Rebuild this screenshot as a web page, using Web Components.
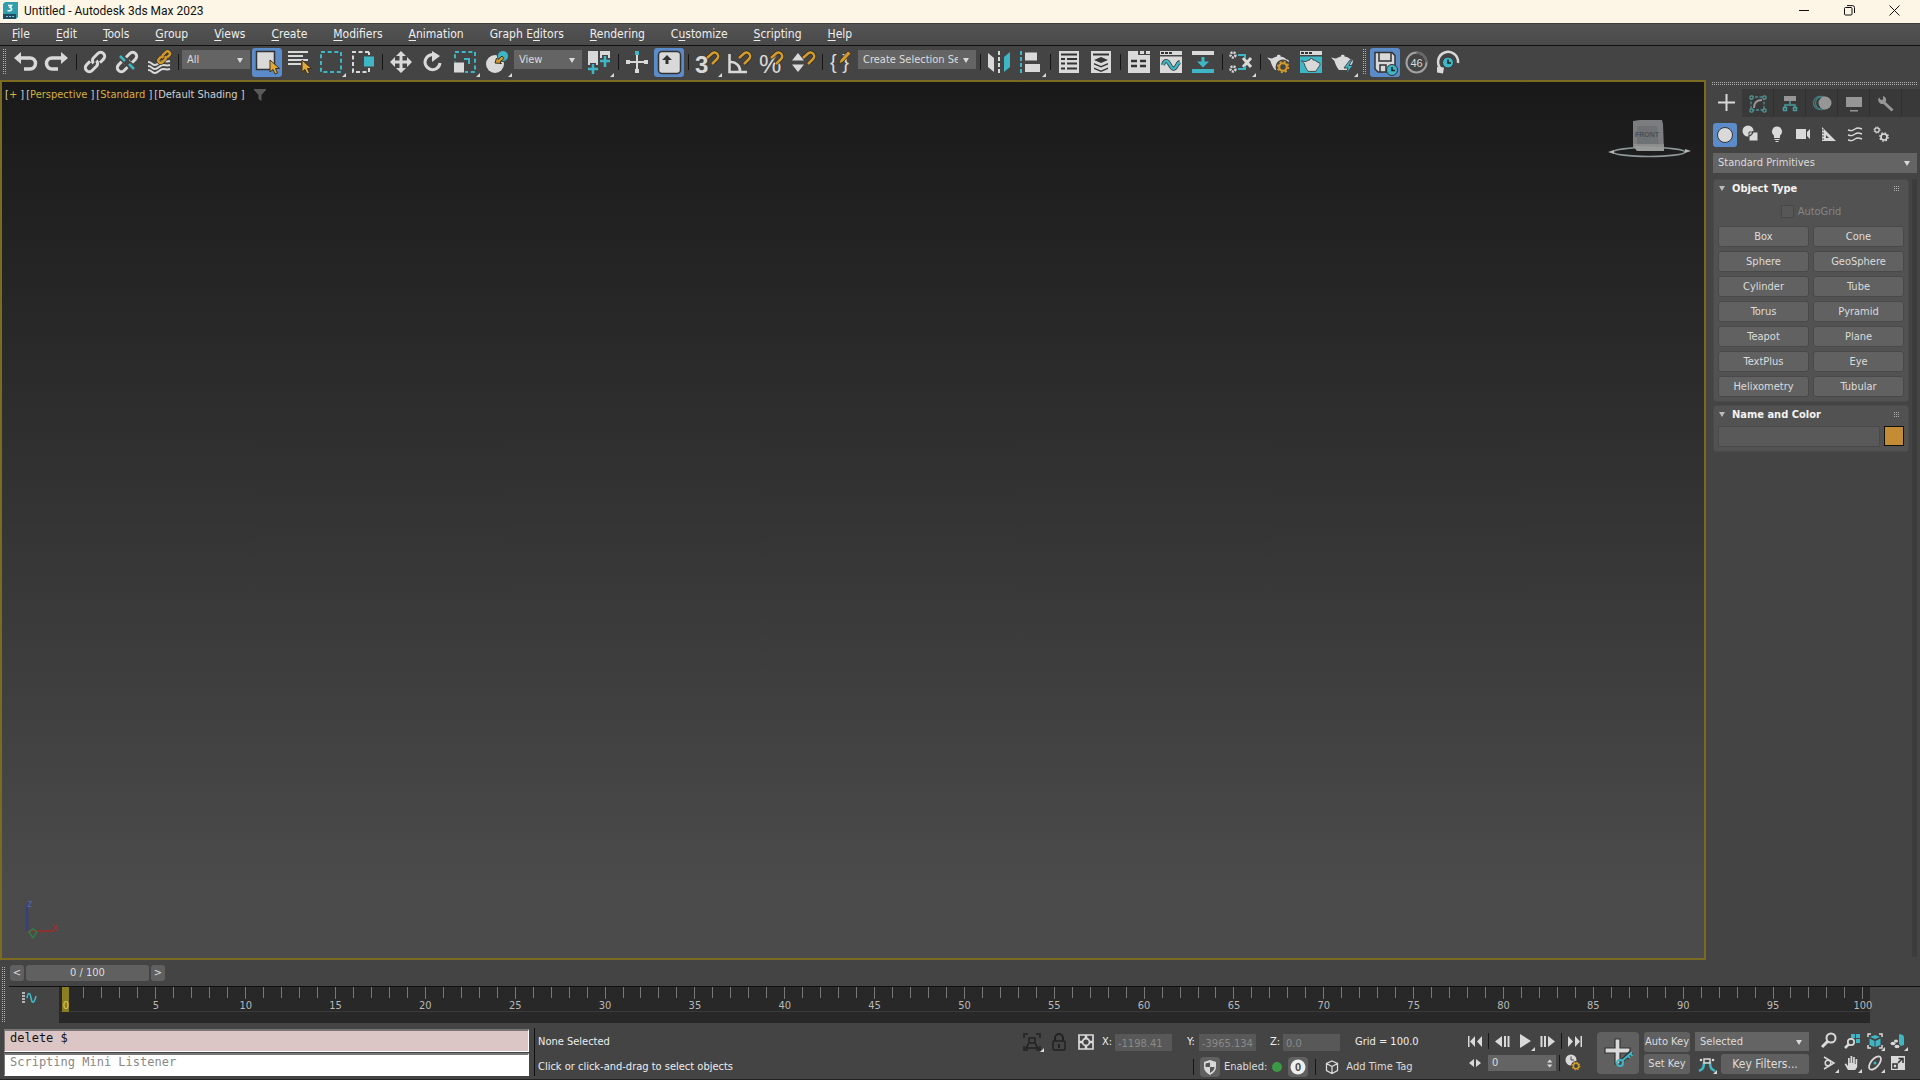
<!DOCTYPE html>
<html lang="en">
<head>
<meta charset="utf-8">
<title>Untitled - Autodesk 3ds Max 2023</title>
<style>
  html, body { margin: 0; height: 100%; }
  body {
    --ui: "DejaVu Sans Condensed", "DejaVu Sans", "Noto Sans", sans-serif;
    --bg: #444444; --field: #646464; --text: #dcdcdc; --light: #d9d9d9;
    --teal: #3fb6c6; --gold: #d39a2c; --blue: #5b8bc9; --accent: #7b6a22;
    --dots: conic-gradient(from 270deg, #b0b0b0 25%, transparent 0) 0 0 / 2px 2px;
    background: var(--bg); color: var(--text);
    font: 11px/14px var(--ui); overflow: hidden;
  }
</style>
</head>
<body>
<max-app></max-app>
<script>
const magnet = '<path d="M16 12l5-4.500a3.600 3.600 0 0 1 5 5.500l-5 5" fill="none" stroke="#2f2a20" stroke-width="4"/><path d="M16 12l5-4.500a3.600 3.600 0 0 1 5 5.500l-5 5" fill="none" stroke="var(--gold)" stroke-width="2.500"/>';
const cursor = '<path d="M19 14v12l3-2.500 2 4.500 2.500-1-2-4.500h4z" fill="#e0a93a" stroke="#3a3020" stroke-width="1"/>';
const chain = (c, w) => `<g transform="rotate(-45 16 16)" fill="none" stroke="${c}" stroke-width="${w}"><path d="M13 12H8a4 4 0 0 0 0 8h6a4 4 0 0 0 4-4M19 20h5a4 4 0 0 0 0-8h-6a4 4 0 0 0-4 4"/></g>`;
const pot = '<path d="M4 11.500l4.500 1c1.500 0 2.500-1.500 5.500-2V9.500c0-1 3.500-1 3.500 0v1c3 .3 4.500 1.500 6 3 2-.5 3 1.500 2 3.500S22.500 21 21 24h-9C9.500 21 8 17.500 7.500 15z"/>';
const gear = (x, y, r, c) => `<circle cx="${x}" cy="${y}" r="${r}" fill="none" stroke="${c}" stroke-width="${r * .55}"/><circle cx="${x}" cy="${y}" r="${r * 1.4}" fill="none" stroke="${c}" stroke-width="${r * .45}" stroke-dasharray="${r * .55} ${r * .55}"/>`;
const clock = (x, y, r) => `<circle cx="${x}" cy="${y}" r="${r}" fill="var(--teal)" stroke="#333"/><path d="M${x} ${y - 3}v3.500h3" fill="none" stroke="#222" stroke-width="1.500"/>`;

/* Toolbar artwork: 32 x 32 grid, drawn in the light tone unless a shape says otherwise */
const ICONS = {
  undo: '<path d="M5 12l7-6v12z"/><path d="M11 12h10a5.500 5.500 0 0 1 0 11h-6" fill="none" stroke="var(--light)" stroke-width="3.500"/>',
  redo: '<path d="M27 12l-7-6v12z"/><path d="M21 12H11a5.500 5.500 0 0 0 0 11h6" fill="none" stroke="var(--light)" stroke-width="3.500"/>',
  link: chain('var(--light)', 3),
  unlink: chain('var(--light)', 3) + '<path d="M7 8l18 17" stroke="#444" stroke-width="6"/><path d="M9 10l5 5M18 18l5 5" stroke="var(--teal)" stroke-width="2.500"/>',
  bind: '<g fill="none" stroke="var(--light)" stroke-width="2"><path d="M5 16c4 0 4 3 7 3s5-4 8-4 4 1 7 0M5 20c4 0 4 3 7 3s5-4 8-4 4 1 7 0M5 24c4 0 4 3 7 3s5-4 8-4 4 1 7 0"/></g><g transform="translate(11.500 1.500) scale(.6)">' + chain('#3a3020', 6) + chain('var(--gold)', 4) + '</g>',
  select: '<path d="M5.500 5.500h18v18h-18z" stroke="#333" stroke-width="1.500"/>' + cursor,
  byname: '<path d="M5 5h20v2H5zM5 9h15v2H5zM5 13h20v2H5zM5 17h13v2H5z"/>' + cursor,
  region: '<path d="M6 6h20v20H6z" fill="none" stroke="var(--teal)" stroke-width="2" stroke-dasharray="4 2.700"/>',
  crossing: '<path d="M22 6H6v20h16M22 6v3M22 22v4" fill="none" stroke="var(--light)" stroke-width="2" stroke-dasharray="4 2.500"/><path d="M17 10.500h10v10H17z" fill="var(--teal)"/>',
  move: '<path d="M16 5l5 5h-3.500v4.500H22V11l5 5-5 5v-3.500h-4.500V22H21l-5 5-5-5h3.500v-4.500H10V21l-5-5 5-5v3.500h4.500V10H11z"/>',
  rotate: '<path d="M20.500 10.500A7.500 7.500 0 1 0 23 17" fill="none" stroke="var(--light)" stroke-width="3"/><path d="M15 5l8 5-8 6z"/>',
  scale: '<path d="M6 6h20v20H6z" fill="none" stroke="var(--teal)" stroke-width="2" stroke-dasharray="4 2.700"/><path d="M4.500 16h11v11h-11z" stroke="#444"/><path d="M15 13h5v5" fill="none" stroke="var(--teal)" stroke-width="2"/>',
  place: '<circle cx="14" cy="18" r="9"/><circle cx="22" cy="10" r="5.500" fill="var(--teal)" stroke="#444"/><path d="M14 17l1.500-5 1.500 1.500 4-3.500 2 2.500-4 3.500 1.500 1.500z" fill="var(--gold)" stroke="#3a3020"/>',
  pivot: '<path d="M5 5h10v14H5zM17 5h10v9H17z"/><path d="M10 17v11M5 22h10M22 9v12M17 15h10" stroke="#444" stroke-width="6"/><path d="M10 18v10M5 23h10M22 10v11M17 15h10" stroke="var(--teal)" stroke-width="2.500"/>',
  manip: '<path d="M15 9h2v6h7v2h-7v7h-2v-7H8v-2h7zM5 14h4v4H5zM23 14h4v4h-4zM14 23h4v4h-4z"/><path d="M14 5h4v4h-4z" fill="var(--teal)"/>',
  keyboard: '<rect x="5.500" y="5.500" width="22" height="22" rx="3.500" stroke="#333" stroke-width="1.500"/><path d="M14 9l5 5h-3.500v4h-3v-4H9z" fill="#333"/>',
  snap3: '<text x="4" y="26.500" font-family="Liberation Sans" font-weight="700" font-size="24">3</text>' + magnet,
  anglesnap: '<path d="M6.500 8v18H24M7 16a9 9 0 0 1 10 10" fill="none" stroke="var(--light)" stroke-width="2.500"/>' + magnet,
  percentsnap: '<text x="4" y="27" font-family="Liberation Sans" font-size="25">%</text>' + magnet,
  spinsnap: '<path d="M11 7l6 7.500H5zM11 26l6-7.500H5z"/>' + magnet,
  namedsets: '<text x="5" y="23" font-family="Liberation Sans" font-size="20">{ }</text><path d="M14 18l1-4L23 5l3 2.500-8 8.500z" fill="var(--gold)" stroke="#3a3020" stroke-width=".8"/>',
  mirror: '<path d="M5 7l6 5v14l-6-5z"/><path d="M21 11l6-5v15l-6 5z" fill="var(--teal)"/><path d="M16 5v23" stroke="var(--light)" stroke-width="2" stroke-dasharray="4 2"/>',
  align: '<path d="M10 6.500h12v8H10zM10 18h15v8H10z"/><path d="M6 5v23" stroke="var(--teal)" stroke-width="2" stroke-dasharray="4 2"/>',
  scene: '<path d="M6 5h20v22H6z"/><path d="M8 8.500h16M8 13h4M14 13h10M8 17.500h4M14 17.500h10M8 22.500h4M14 22.500h10" stroke="#333" stroke-width="2"/>',
  layers: '<path d="M6 5h20v22H6z"/><path d="M8 8.500h16" stroke="#333" stroke-width="2"/><path d="M16 11l7 3-7 3-7-3zM9 17l7 3 7-3v1.500l-7 3-7-3zM9 21.500l7 3 7-3V23l-7 3-7-3z" fill="#333"/>',
  ribbon: '<path d="M5 5h10v4h12v18H5zM17 5h4v3h-4zM23 5h4v3h-4z"/><path d="M8 15h6M17 15h6M8 20h6M17 20h6" stroke="#333" stroke-width="2.500"/>',
  curve: '<path d="M5 5h22v4H5zM5 10.500h22V27H5z"/><path d="M6 7h3M10 7h3M14 7h3" stroke="#333" stroke-width="2"/><path d="M8 19c1-4 3-5 5-3s4 9 7 6 2-5 5-6" fill="none" stroke="#333" stroke-width="4"/><path d="M8 19c1-4 3-5 5-3s4 9 7 6 2-5 5-6" fill="none" stroke="var(--teal)" stroke-width="2.500"/>',
  dope: '<path d="M5 5h22v4H5z"/><path d="M5 23h22v4H5zM14.500 11h3v4.500H22L16 21.500l-6-6h4.500z" fill="var(--teal)"/>',
  material: '<g fill="none" stroke="var(--light)" stroke-width="2.500" stroke-dasharray="2 1"><circle cx="8" cy="9" r="2.500"/><circle cx="8" cy="23" r="2.500"/></g><path d="M18 12l8 9M26 12l-8 9" stroke="var(--light)" stroke-width="3"/><path d="M13 9h7v3M13 23h7v-3" fill="none" stroke="var(--teal)" stroke-width="2"/>',
  rendersetup: pot + '<circle cx="20" cy="21" r="7.500" fill="#444"/>' + gear(20, 21, 3.800, 'var(--gold)'),
  frame: '<path d="M5 5h22v4H5z"/><path d="M6 7h3M10 7h3M14 7h3" stroke="#333" stroke-width="2"/><path d="M5 10.500h22V27H5z" fill="var(--teal)"/><g transform="translate(3 5) scale(.85)" stroke="#333">' + pot + '</g>',
  render: pot + '<path d="M23 14l-6 8h4l-2 6 7-8.500h-4l3-5.500z" fill="var(--teal)" stroke="#444"/>',
  autosave: '<path d="M6 6.500h17l3 3V26H9l-3-3z" fill="#d9d9d9" stroke="#333" stroke-width="1.500"/><path d="M10 7v8h12V7M11 26v-7h6v7" fill="none" stroke="#333" stroke-width="1.500"/>' + clock(23, 24, 5.500),
  count: '<circle cx="15.500" cy="16.500" r="10" fill="none" stroke="#a2a2a2" stroke-width="2"/><path d="M15.500 6.500a10 10 0 0 1 10 10" fill="none" stroke="#666" stroke-width="2"/><text x="15.500" y="21" text-anchor="middle" font-size="11" font-family="Liberation Sans">46</text>',
  history: '<path d="M25 17a10 10 0 1 0-17 6" fill="none" stroke="var(--light)" stroke-width="2.500"/><path d="M4 21l7 .5-1 6-6-1z"/>' + clock(15, 16.500, 5.500),

  /* command panel */
  plus: '<path d="M14.500 7h2v7.500H24v2h-7.500V24h-2v-7.500H7v-2h7.500z"/>',
  modify: '<path d="M9 10v13h13V10z" fill="none" stroke="#4a8f8e" stroke-width="1.300" stroke-dasharray="3 1.500"/><path d="M12 21c0-6 3-8 8-8" fill="none" stroke="#969696" stroke-width="2"/><path d="M8 9h3v3H8zM21 9h3v3h-3zM8 22h3v3H8zM21 22h3v3h-3z" fill="#393939" stroke="#58a8a4"/>',
  hierarchy: '<path d="M10 9h12v5H10z" fill="#969696"/><path d="M16 14v3M11 22v-4h10v4" fill="none" stroke="#4a9d9a" stroke-width="1.500"/><path d="M9.500 20.500h3v3h-3zM19.500 20.500h3v3h-3z" fill="#393939" stroke="#4a9d9a" stroke-width="1.500"/>',
  motion: '<g fill="none" stroke="#437f80" stroke-width="1.300"><circle cx="14" cy="16" r="6.500"/><circle cx="16" cy="16" r="6.500"/></g><circle cx="19" cy="16" r="6.500" fill="#969696"/>',
  display: '<path d="M8 10h16v10H8zM12 23h8v1.500h-8z" fill="#969696"/>',
  utilities: '<path d="M13.500 15l9 8.500" stroke="#969696" stroke-width="3"/><path d="M9 10.500a4 4 0 1 0 4-1.500v3.500l-2 .5z" fill="#969696"/>',
  geometry: '<circle cx="16" cy="16" r="7.500" stroke="#333"/>',
  shapes: '<circle cx="13" cy="13" r="5.500"/><path d="M14 14h9v9h-9z" stroke="#444"/><path d="M18 13a5.500 5.500 0 0 1-4 5" stroke="#444" stroke-width="1.300" fill="none"/>',
  lights: '<path d="M16 8.500a5 5 0 0 1 3 9V20h-6v-2.500a5 5 0 0 1 3-9zM13.500 21h5v1h-5zM14.500 23h3v1h-3z"/>',
  cameras: '<path d="M9 11h10v10H9zM20 14l3-3v10l-3-3z"/>',
  helpers: '<path fill-rule="evenodd" d="M9 9l14 14H9zM13 17v3h3z"/><path d="M9 12h2M9 15h2M9 18h2M9 21h2" stroke="#444"/>',
  waves: '<g fill="none" stroke="var(--light)" stroke-width="1.400"><path d="M9 12c4 1 4 1 7-1s4-1 7 0M9 17c4 1 4 1 7-1s4-1 7 0M9 22c4 1 4 1 7-1s4-1 7 0"/></g>',
  systems: gear(12, 12, 2.200, 'var(--light)') + gear(19, 19, 3, 'var(--light)'),

  /* time and status controls */
  keycurve: '<path d="M8 10h3M8 13h3M8 16h3M8 19h3" stroke="var(--light)" stroke-width="1.500"/><path d="M13 15c1-6 3-6 4 0s3 6 5-2" fill="none" stroke="var(--teal)" stroke-width="1.600"/>',
  isolate: '<g fill="none" stroke="#222" stroke-width="1.500"><path d="M8 12V8h4M20 8h4v4M8 20v4h4M20 24h4v-4M13 12h6v5h-6zM10 22l3-5h6l3 5z"/></g>',
  lock: '<rect x="10" y="15" width="12" height="9" rx="1" fill="none" stroke="#222" stroke-width="1.500"/><path d="M12 15v-3a4 4 0 0 1 8 0v3M16 18v4" fill="none" stroke="#222" stroke-width="2"/>',
  absolute: '<path d="M9 9h14v14H9z" fill="none" stroke="var(--light)" stroke-width="1.700"/><path d="M16 9v14M9 16h14" stroke="var(--light)" stroke-width="2.500"/><circle cx="16" cy="16" r="3.500" fill="#444" stroke="var(--light)" stroke-width="1.800"/>',
  shield: '<path d="M16 9l6 2v5c0 4-3 6-6 8-3-2-6-4-6-8v-5z"/><path d="M16 11.500V16h-4.500v-3.500zM16 16h4.500c0 3-2 4-4.500 6z" fill="#555"/>',
  zero: '<circle cx="16" cy="16" r="7.500" fill="#eee"/><text x="16" y="20" text-anchor="middle" style="fill:#444" font-size="11" font-weight="700" font-family="Liberation Sans">0</text>',
  cube: '<path d="M16 10l5.500 2.500v7L16 22.500l-5.500-3v-7zM10.500 12.500L16 15.500l5.500-3M16 15.500v7" fill="none" stroke="var(--light)" stroke-width="1.300"/>',
  start: '<path d="M9 11h1.500v11H9zM16 11v11l-5-5.500zM23 11v11l-5-5.500z"/>',
  prev: '<path d="M16 11v11l-7-5.500zM18 11h2v11h-2zM21.500 11h2v11h-2z"/>',
  play: '<path d="M11 9l11 7-11 7z"/>',
  next: '<path d="M16 11v11l7-5.500zM12 11h2v11h-2zM8.500 11h2v11h-2z"/>',
  end: '<path d="M21.500 11H23v11h-1.500zM16 11v11l5-5.500zM9 11v11l5-5.500z"/>',
  keymode: '<path d="M15 12v8l-5-4zM17 12v8l5-4z"/>',
  timeconfig: '<circle cx="14" cy="13" r="5.500"/><path d="M14 9.500V13h3" fill="none" stroke="#444"/><circle cx="19" cy="19" r="5" fill="#444"/>' + gear(19, 19, 2.700, 'var(--gold)'),
  setkey: '<path d="M13 2h5v9h10v5H18v11h-5V16H3v-5h10z" stroke="#333" stroke-width="1.200"/><path d="M19 25L29 15M25 19l3 2M28 16l2 2" stroke="#333" stroke-width="4"/><g fill="none" stroke="var(--teal)" stroke-width="2"><circle cx="18" cy="26" r="3"/><path d="M20 24l10-9M26 19l2 2M28.500 17l2 2"/></g>',
  tangent: '<path d="M13 14c0 6-1 7-5 9M19 14c0 6 1 7 5 9" fill="none" stroke="var(--teal)" stroke-width="2.500"/><path d="M13 11h6v4h-6z" fill="none" stroke="var(--light)" stroke-width="1.500"/><circle cx="10" cy="12" r="1.300"/><circle cx="22" cy="12" r="1.300"/>',
  zoom: '<circle cx="18" cy="13" r="4.500" fill="none" stroke="var(--light)" stroke-width="2"/><path d="M15 16l-6 6" stroke="var(--light)" stroke-width="3"/>',
  zoomall: '<path d="M15 9h4v4h-4zM20 9h4v4h-4zM20 14h4v4h-4z" fill="var(--teal)"/><circle cx="15" cy="17" r="3.200" fill="#444" stroke="var(--light)" stroke-width="1.700"/><path d="M13 19l-4 4" stroke="var(--light)" stroke-width="2.500"/>',
  extents: '<path d="M9 12V9h3M20 9h3v3M9 20v3h3M20 23h3v-3" fill="none" stroke="var(--light)" stroke-width="1.500"/><path d="M16 10l5 2-5 2-5-2zM10.500 13.500L15.500 16v6l-5-2zM21.500 13.500L16.500 16v6l5-2z" fill="var(--teal)"/>',
  extentsall: '<path d="M17 9l4 1 1 2v8l-3 1-2-2z" fill="var(--teal)"/><ellipse cx="11" cy="18.500" rx="2.500" ry="1.800"/><ellipse cx="15" cy="21.500" rx="2.500" ry="1.800"/><ellipse cx="14" cy="16" rx="2" ry="1.500"/>',
  fov: '<path d="M11 10l10 6-10 6" fill="none" stroke="var(--light)" stroke-width="1.500"/><circle cx="15" cy="16" r="2.800" fill="none" stroke="var(--light)" stroke-width="1.500"/>',
  pan: '<path d="M12 23l-3.500-6 1.500-.5 2 2.500v-8h1.700v5h.8V9h1.800v7h.8v-6h1.700v7h.8v-5h1.600v8l-2 3z"/>',
  orbit: '<ellipse cx="16" cy="16" rx="8" ry="4" transform="rotate(-50 16 16)" fill="none" stroke="var(--light)" stroke-width="1.800"/><circle cx="16" cy="16" r="1.500" fill="var(--teal)"/>',
  maximize: '<path d="M9 9h14v14H9z"/><path d="M11 21v-4h4v4zM16 16l4-4M16.500 11.500H21V16" fill="none" stroke="#333" stroke-width="1.500"/>'
};

const svg = (name, size = 32) =>
  `<svg class="ico" width="${size}" height="${size}" viewBox="0 0 32 32" aria-hidden="true">${ICONS[name] || ''}</svg>`;

const define = (tag, render) => customElements.define(tag, class extends HTMLElement {
  connectedCallback() {
    if (this.shadowRoot) return;
    const t = document.createElement('template');
    t.innerHTML = '<style>*{box-sizing:border-box}button,input,select{font:inherit;color:inherit;margin:0;border:0;border-radius:0;padding:0}svg{display:block;fill:var(--light)}</style>' + render(this);
    this.attachShadow({ mode: 'open' }).append(t.content.cloneNode(true));
  }
});

define('tool-button', el => `<style>
  :host { display: flex; width: var(--cell, 32px); height: var(--cell-h, 32px); align-items: center; justify-content: center; flex: none; }
  button { position: relative; background: none; width: 100%; height: 100%; display: flex; align-items: center; justify-content: center; }
  svg { flex: none; }
  :host([active]) button { width: calc(100% - 2px); height: calc(100% - 3px); background: var(--blue); border-radius: 3px; }
  :host([raised]) button { background: #606060; border-radius: 4px; }
  :host([flyout]) button::after { content: ""; position: absolute; right: 1px; bottom: 1px; border: 2px solid transparent; border-right-color: var(--light); border-bottom-color: var(--light); }
</style><button aria-label="${el.getAttribute('label')}">${svg(el.getAttribute('icon'), el.getAttribute('size') || 32)}</button>`);

define('tool-sep', () => `<style>
  :host { display: flex; width: var(--sep, 6px); flex: none; justify-content: center; }
  i { width: 1px; background: #161616; }
</style><i></i>`);

define('drop-down', el => `<style>
  :host { display: flex; position: relative; }
  select { appearance: none; width: 100%; height: 100%; background: var(--field); padding: 0 18px 0 5px; }
  :host::after { content: ""; position: absolute; right: 7px; top: calc(50% - 2px); border: 3px solid transparent; border-top: 5px solid var(--light); border-bottom: 0; pointer-events: none; }
</style><select aria-label="${el.getAttribute('label')}"><option>${el.getAttribute('value')}</option></select>`);

define('title-bar', () => `<style>
  :host { display: flex; align-items: center; height: 23px; background: #fdf6e6; color: #111; font: 12px/16px Roboto, "Open Sans", sans-serif; padding: 0 11px 2px 3px; box-sizing: border-box; gap: 6px; }
  .logo { flex: none; }
  span { flex: 1; }
  nav { display: flex; gap: 15px; }
  button { background: none; width: 30px; height: 20px; display: grid; place-items: center; }
  button svg { fill: none; stroke: #111; }
</style>
<svg class="logo" width="15" height="17" viewBox="0 0 15 17" aria-hidden="true"><path d="M0 2l2-2h13v15l-2 2H0z" fill="#2f9fae"/><path d="M0 12h13v5H0z" fill="#1d4a5e"/><path d="M5 3.500h3.500l-1.500 2c3 .5 2 4-2.500 3" fill="none" stroke="#fff" stroke-width="1.500"/><path d="M3 14.500h8" stroke="#8ec2cc" stroke-dasharray="2 1"/></svg>
<span>Untitled - Autodesk 3ds Max 2023</span>
<nav>
 <button aria-label="Minimize"><svg width="10" height="11" viewBox="0 0 10 11"><path d="M0 5.500h10"/></svg></button>
 <button aria-label="Restore"><svg width="11" height="11" viewBox="0 0 11 11"><rect x=".5" y="2.500" width="7.500" height="7.500" rx="1"/><path d="M3 .6h5.500a2 2 0 0 1 2 2V8"/></svg></button>
 <button aria-label="Close"><svg width="11" height="11" viewBox="0 0 11 11"><path d="M.5.5l10 10M10.500.5l-10 10"/></svg></button>
</nav>`);

define('menu-bar', () => `<style>
  :host { display: flex; height: 23px; align-items: center; gap: 26px; padding: 0 12px 2px; box-sizing: border-box; background: linear-gradient(#545454, #494949); border-top: 1px solid #3d3d3d; border-bottom: 1px solid #111; font-size: 12px; line-height: 16px; color: #eee; }
  button { background: none; white-space: nowrap; }
  u { text-underline-offset: 2px; }
</style>` + ['_File', '_Edit', '_Tools', '_Group', '_Views', '_Create', '_Modifiers', '_Animation', 'Graph E_ditors', '_Rendering', 'C_ustomize', '_Scripting', '_Help']
  .map(s => `<button>${s.replace(/_(.)/, '<u>$1</u>')}</button>`).join(''));

define('main-toolbar', () => {
  const b = (icon, label, extra = '') => `<tool-button icon="${icon}" label="${label}" ${extra}></tool-button>`;
  const s = '<tool-sep></tool-sep>';
  return `<style>
  :host { display: flex; height: 34px; padding-bottom: 2px; box-sizing: border-box; flex: none; }
  .grip { width: 9px; flex: none; display: flex; justify-content: center; align-items: center; }
  .grip::before { content: ""; width: 3px; height: 26px; background: var(--dots); }
  .grip.mid { width: 10px; }
  tool-sep { padding: 8px 0; box-sizing: border-box; }
  drop-down { height: 19px; margin: 4px 1px; width: 68px; flex: none; }
  drop-down.wide { width: 118px; }
</style><div class="grip"></div>`
  + b('undo', 'Undo') + b('redo', 'Redo') + s + b('link', 'Link') + b('unlink', 'Unlink') + b('bind', 'Bind to Space Warp') + s
  + '<drop-down label="Selection Filter" value="All"></drop-down>'
  + b('select', 'Select Object', 'active') + b('byname', 'Select by Name') + b('region', 'Selection Region', 'flyout') + b('crossing', 'Window Crossing') + s
  + b('move', 'Move') + b('rotate', 'Rotate') + b('scale', 'Scale', 'flyout') + b('place', 'Place', 'flyout')
  + '<drop-down label="Reference Coordinate System" value="View"></drop-down>'
  + b('pivot', 'Pivot Center', 'flyout') + s + b('manip', 'Manipulate') + b('keyboard', 'Keyboard Override', 'active') + s
  + b('snap3', 'Snaps', 'flyout') + b('anglesnap', 'Angle Snap') + b('percentsnap', 'Percent Snap') + b('spinsnap', 'Spinner Snap') + s
  + b('namedsets', 'Named Selection Sets') + '<drop-down class="wide" label="Named Selection" value="Create Selection Se"></drop-down>' + s
  + b('mirror', 'Mirror') + b('align', 'Align', 'flyout') + s + b('scene', 'Scene Explorer') + b('layers', 'Layer Explorer') + s
  + b('ribbon', 'Ribbon') + b('curve', 'Curve Editor') + b('dope', 'Schematic View') + s + b('material', 'Material Editor', 'flyout') + s
  + b('rendersetup', 'Render Setup') + b('frame', 'Rendered Frame') + b('render', 'Render', 'flyout')
  + '<div class="grip mid"></div>' + b('autosave', 'Autosave', 'active') + b('count', 'Autosave Countdown') + b('history', 'Reset Timer');
});

define('view-port', () => `<style>
  :host { display: block; position: relative; flex: 1; min-width: 0; border: 2px solid var(--accent); box-sizing: border-box; background: linear-gradient(#191919, #4b4b4b 92%); }
  .labels { display: flex; gap: 2px; align-items: center; padding: 6px 3px; color: #cfcfcf; }
  b { font-weight: 400; color: #d6b13c; }
  .labels svg { fill: #5a5a5a; margin-left: 6px; }
  .cube { position: absolute; top: 36px; right: 11px; }
  .axes { position: absolute; left: 20px; bottom: 18px; }
</style>
<div class="labels"><span>[<b>+</b> ]</span><span>[<b>Perspective</b> ]</span><span>[<b>Standard</b> ]</span><span>[Default Shading ]</span>
<svg width="14" height="12" viewBox="0 0 14 12" aria-hidden="true"><path d="M1 0h12v1L8.500 6v6L5.500 10V6L1 1z"/></svg></div>
<svg class="cube" width="86" height="42" viewBox="0 0 86 42" aria-hidden="true">
 <path d="M26 3l7-1h22l1 4 1 26H30l-4-3z" fill="#7b7d7f"/><path d="M30 8h20l2 20H30z" fill="#6f7274"/><path d="M26 28l31 1v4H30z" fill="#9a9a9a"/>
 <text x="40" y="19" text-anchor="middle" style="fill:#4a5053" font-size="7" font-family="Liberation Sans" font-weight="700">FRONT</text>
 <ellipse cx="42" cy="34" rx="36" ry="4.500" fill="none" stroke="#8e9898" stroke-width="1.700"/>
 <path d="M26 26h31v6H30z" fill="#999" opacity=".65"/><path d="M1 34l6-2v4zM84 33l-6-2v4z" fill="#b5b5b5"/></svg>
<svg class="axes" width="42" height="42" viewBox="0 0 42 42" aria-hidden="true">
 <path d="M5 33V9l3-4" fill="none" stroke="#35417d" stroke-width="2.500"/><path d="M5 33h26" stroke="#a52727" stroke-width="1.500"/><path d="M7 34l4 6 4-6-4-3z" fill="none" stroke="#2e7d46" stroke-width="1.500"/>
 <text x="5" y="9" style="fill:#5563ad" font-size="11" font-family="Liberation Sans">z</text><text x="30" y="33" style="fill:#b52626" font-size="11" font-family="Liberation Sans">x</text></svg>`);

define('roll-out', el => `<style>
  :host { display: block; background: #525252; border: 1px solid #4a4a4a; border-radius: 3px; padding: 0 4px 4px; box-sizing: border-box; }
  header { display: flex; align-items: center; height: 17px; gap: 7px; color: #f2f2f2; font-weight: 700; }
  header::before { content: ""; border: 3px solid transparent; border-top: 5px solid #bbb; border-bottom: 0; margin-left: 1px; }
  header span { flex: 1; }
  header i { width: 5px; height: 5px; margin-right: 5px; background: var(--dots); }
</style><header><span>${el.getAttribute('heading')}</span><i></i></header><slot></slot>`);

define('command-panel', () => {
  const b = (icon, label, extra = '') => `<tool-button icon="${icon}" label="${label}" ${extra}></tool-button>`;
  return `<style>
  :host { display: flex; flex-direction: column; width: 214px; flex: none; box-sizing: border-box; padding: 2px 0 0 5px; }
  .grip { height: 3px; margin: 0 3px 4px 1px; flex: none; background: var(--dots); }
  .tabs { display: flex; background: #393939; height: 28px; flex: none; }
  .tabs tool-button { --cell-h: 28px; border-right: 1px solid #303030; box-sizing: border-box; }
  .tabs tool-button:first-child { background: var(--bg); --cell: 31px; border: 0; }
  .kinds { display: flex; padding: 4px 1px 5px; }
  .kinds tool-button { --cell: 26px; --cell-h: 26px; }
  .kinds tool-button:first-child { --cell-h: 27px; }
  drop-down { height: 20px; margin: 0 3px 6px 2px; flex: none; }
  .body { display: flex; flex: 1; gap: 3px; margin: 0 3px 3px 2px; min-height: 0; }
  .rolls { flex: 1; display: flex; flex-direction: column; gap: 3px; }
  .bar { width: 5px; background: #3c3c3c; }
  label { display: flex; justify-content: center; align-items: center; gap: 4px; color: #858585; height: 29px; }
  input[type=checkbox] { appearance: none; width: 13px; height: 13px; border: 1px solid #474747; background: #575757; }
  .grid { display: grid; grid-template-columns: 1fr 1fr; gap: 4px; }
  .grid button { height: 21px; background: #616161; border: 1px solid #494949; border-radius: 3px; }
  .name { display: flex; gap: 4px; padding-top: 3px; }
  .name input { flex: 1; min-width: 0; height: 21px; background: #595959; border: 1px solid #4a4a4a; }
  .name button { width: 20px; height: 20px; background: #c48d35; border: 1px solid #111; }
</style>
<div class="grip"></div>
<div class="tabs">${b('plus', 'Create') + b('modify', 'Modify') + b('hierarchy', 'Hierarchy') + b('motion', 'Motion') + b('display', 'Display') + b('utilities', 'Utilities')}</div>
<div class="kinds">${b('geometry', 'Geometry', 'active') + b('shapes', 'Shapes') + b('lights', 'Lights') + b('cameras', 'Cameras') + b('helpers', 'Helpers') + b('waves', 'Space Warps') + b('systems', 'Systems')}</div>
<drop-down label="Category" value="Standard Primitives"></drop-down>
<div class="body"><div class="rolls">
 <roll-out heading="Object Type"><label><input type="checkbox" disabled>AutoGrid</label>
 <div class="grid">${['Box', 'Cone', 'Sphere', 'GeoSphere', 'Cylinder', 'Tube', 'Torus', 'Pyramid', 'Teapot', 'Plane', 'TextPlus', 'Eye', 'Helixometry', 'Tubular'].map(n => `<button>${n}</button>`).join('')}</div></roll-out>
 <roll-out heading="Name and Color"><div class="name"><input aria-label="Object name"><button aria-label="Object color"></button></div></roll-out>
</div><div class="bar"></div></div>`;
});

define('time-line', () => {
  let ticks = '';
  for (let f = 0; f <= 100; f++) ticks += `<div class="t${f % 5 ? '' : ' five'}${f ? '' : ' now'}">${f % 5 ? '' : `<span>${f}</span>`}</div>`;
  return `<style>
  :host { display: flex; height: 65px; flex: none; box-sizing: border-box; padding: 4px 0 2px; }
  .grip { width: 9px; flex: none; display: flex; padding: 3px 2px 0; }
  .grip::before { content: ""; width: 3px; background: var(--dots); }
  .col { flex: 1; display: flex; flex-direction: column; min-width: 0; }
  .slider { display: flex; gap: 2px; height: 22px; padding: 1px 1px 5px; }
  .slider button { background: #606060; border-radius: 3px; width: 14px; height: 16px; line-height: 16px; }
  .slider .thumb { width: 123px; }
  .track { display: flex; flex: 1; border-top: 1px solid #111; }
  .tools { width: 50px; padding-left: 5px; --cell-h: 24px; }
  .ruler { flex: 1; margin-right: 50px; background: #282828; display: flex; padding-bottom: 11px; }
  .ticks { flex: 1; display: flex; margin: 0 -2px; background: linear-gradient(#3a3a3a, #3a3a3a) 0 100% / 100% 1px no-repeat; }
  .t { flex: 1 1 0; min-width: 0; display: flex; flex-direction: column; align-items: center; }
  .t::before { content: ""; width: 1px; height: 11px; background: #777; flex: none; }
  .five::before { height: 12px; }
  span { line-height: 13px; color: #b8b8b8; font-size: 11px; }
  .now { background: linear-gradient(#8b7d22, #8b7d22) 50% 0 / 7px 100% no-repeat; }
  .now span { color: #d3cf5c; }
</style>
<div class="grip"></div><div class="col">
<div class="slider"><button>&lt;</button><button class="thumb">0 / 100</button><button>&gt;</button></div>
<div class="track"><div class="tools"><tool-button icon="keycurve" label="Open Mini Curve Editor"></tool-button></div><div class="ruler"><div class="ticks">${ticks}</div></div></div></div>`;
});

define('status-bar', () => {
  const b = (icon, label, extra = '') => `<tool-button icon="${icon}" label="${label}" ${extra}></tool-button>`;
  const c = (n, v) => `<label for="c${n}">${n}:</label><input id="c${n}" value="${v}" disabled>`;
  return `<style>
  :host { display: flex; height: 55px; flex: none; box-sizing: border-box; padding: 3px 11px 0 4px; border-bottom: 1px solid #222; --cell: 23px; --cell-h: 22px; }
  .listener { flex: 0 1 525px; display: flex; flex-direction: column; gap: 1px; margin: 1px 0 0; font: 12px/14px "DejaVu Sans Mono", monospace; }
  .listener input { height: 23px; min-width: 0; padding: 0 0 6px 5px; border: 1px solid #fff; border-top: 2px solid #777; border-left-color: #777; background: #fff; }
  .listener .macro { background: #dcc5c5; color: #111; }
  .listener input::placeholder { color: #888; opacity: 1; }
  .prompt { flex: 1; margin: 0 0 3px 5px; border-left: 1px solid #111; padding: 7px 0 0 3px; display: flex; flex-direction: column; gap: 11px; color: #eee; white-space: nowrap; }
  .coords, .play, .rows { display: flex; flex-direction: column; }
  .row { display: flex; align-items: center; height: 22px; }
  .coords { width: 445px; padding-top: 2px; gap: 1px; }
  .coords .row { height: 24px; }
  .coords tool-button { --cell: 27px; }
  .coords .end tool-button { --cell: 20px; --cell-h: 20px; }
  .coords .end { padding-left: 172px; gap: 4px; }
  .coords label { width: 16px; text-align: center; margin: 0 0 0 11px; color: #eee; }
  .coords label:first-of-type { margin: 0; }
  .coords input { width: 57px; height: 17px; background: #585858; color: #8a8a8a; padding: 2px 3px 0; }
  .coords .grid { margin-left: 15px; color: #eee; }
  .dot { width: 10px; height: 10px; border-radius: 50%; background: #3b9a45; margin: 0 2px 0 1px; }
  .coords .tag { background: none; }
  tool-sep { height: 16px; }
  .play { padding-top: 2px; --sep: 4px; }
  .spin { display: flex; align-items: center; width: 68px; height: 16px; background: var(--field); padding: 0 4px; margin: 0 1px 0 2px; }
  .spin input { width: 100%; min-width: 0; background: none; }
  .big { --cell: 42px; --cell-h: 42px; margin: 4px 5px 0 11px; }
  .rows { padding-top: 4px; margin-right: 5px; gap: 2px; }
  .rows button { height: 20px; width: 46px; background: #606060; border-radius: 3px; white-space: nowrap; }
  .rows .filters { width: 88px; font-size: 12px; }
  .keys { width: 114px; }
  .keys drop-down { height: 19px; margin-bottom: 1px; }
  .keys .row { height: 20px; justify-content: space-between; }
  .nav { display: grid; grid-template-columns: repeat(4, 23px); margin-left: 3px; padding-top: 2px; align-content: start; }
</style>
<div class="listener"><input class="macro" aria-label="Macro recorder" value="delete $"><input aria-label="Scripting Mini Listener" placeholder="Scripting Mini Listener"></div>
<div class="prompt"><span>None Selected</span><span>Click or click-and-drag to select objects</span></div>
<div class="coords">
 <div class="row">${b('isolate', 'Isolate Selection', 'flyout') + b('lock', 'Selection Lock') + b('absolute', 'Absolute Mode') + c('X', '-1198.41') + c('Y', '-3965.134') + c('Z', '0.0')}<span class="grid">Grid = 100.0</span></div>
 <div class="row end"><tool-sep></tool-sep>${b('shield', 'Security', 'raised')}<span>Enabled:</span><i class="dot"></i>${b('zero', 'Notifications', 'raised')}<tool-sep></tool-sep>${b('cube', 'Time Tag')}<button class="tag">Add Time Tag</button></div>
</div>
<div class="play">
 <div class="row">${b('start', 'Go to Start')}<tool-sep></tool-sep>${b('prev', 'Previous Frame') + b('play', 'Play', 'flyout') + b('next', 'Next Frame')}<tool-sep></tool-sep>${b('end', 'Go to End')}</div>
 <div class="row">${b('keymode', 'Key Mode')}<div class="spin"><input aria-label="Current frame" value="0"><svg width="6" height="9" viewBox="0 0 6 9" aria-hidden="true"><path d="M3 0l3 3.500H0zM3 9l3-3.500H0z"/></svg></div><tool-sep></tool-sep>${b('timeconfig', 'Time Configuration')}</div>
</div>
${b('setkey', 'Set Keys', 'class="big" raised')}
<div class="rows"><button>Auto Key</button><button>Set Key</button></div>
<div class="rows keys"><drop-down label="Selection List" value="Selected"></drop-down><div class="row">${b('tangent', 'Default Tangents', 'flyout')}<button class="filters">Key Filters...</button></div></div>
<div class="nav">${b('zoom', 'Zoom') + b('zoomall', 'Zoom All') + b('extents', 'Zoom Extents', 'flyout') + b('extentsall', 'Zoom Extents All', 'flyout') + b('fov', 'Field of View', 'flyout') + b('pan', 'Pan', 'flyout') + b('orbit', 'Orbit', 'flyout') + b('maximize', 'Maximize Viewport')}</div>`;
});

define('max-app', () => `<style>
  :host { display: flex; flex-direction: column; height: 100vh; }
  main { display: flex; flex: 1; min-height: 0; }
</style><title-bar></title-bar><menu-bar></menu-bar><main-toolbar></main-toolbar>
<main><view-port></view-port><command-panel></command-panel></main>
<time-line></time-line><status-bar></status-bar>`);
</script>
</body>
</html>
